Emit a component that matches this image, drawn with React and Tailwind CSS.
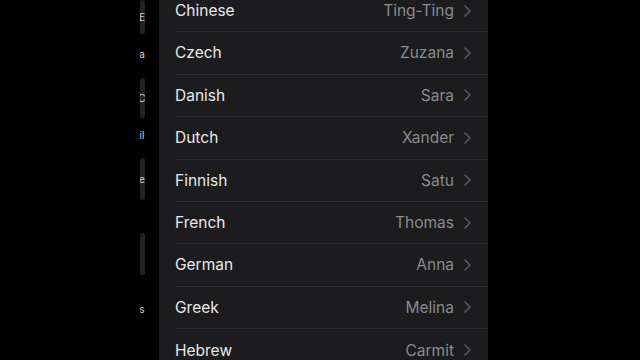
import React from 'react';

const voices = [
  { lang: 'Chinese', voice: 'Ting-Ting' },
  { lang: 'Czech', voice: 'Zuzana' },
  { lang: 'Danish', voice: 'Sara' },
  { lang: 'Dutch', voice: 'Xander' },
  { lang: 'Finnish', voice: 'Satu' },
  { lang: 'French', voice: 'Thomas' },
  { lang: 'German', voice: 'Anna' },
  { lang: 'Greek', voice: 'Melina' },
  { lang: 'Hebrew', voice: 'Carmit' },
];

// blurred edge of the page behind the sheet
const edgeBits = [
  { h: 'h-[34px]', mt: 'mt-0', ch: 'E' },
  { h: 'h-[28px]', mt: 'mt-[6px]', ch: 'a', bare: true },
  { h: 'h-[40px]', mt: 'mt-[10px]', ch: 'C' },
  { h: 'h-[22px]', mt: 'mt-[6px]', ch: 'il', bare: true },
  { h: 'h-[42px]', mt: 'mt-[12px]', ch: 'e' },
  { h: 'h-[42px]', mt: 'mt-[33px]', ch: '' },
  { h: 'h-[24px]', mt: 'mt-[22px]', ch: 's', bare: true },
];

const Chevron = () => (
  <svg width="7" height="12" viewBox="0 0 7 12" fill="none" className="ml-[10px] shrink-0">
    <path d="M1 1l5 5-5 5" stroke="#58585c" strokeWidth="1.6" strokeLinecap="round" strokeLinejoin="round" />
  </svg>
);

const App = () => {
  return (
    <div
      className="w-[640px] h-[360px] bg-black flex overflow-hidden"
      style={{ fontFamily: 'Inter, "Noto Sans", sans-serif' }}
    >
      {/* left edge of the page underneath */}
      <div className="w-[159px] shrink-0 flex justify-end pr-[14px]">
        <div className="w-[6px] flex flex-col items-center">
          {edgeBits.map((b, i) => (
            <div
              key={i}
              className={`${b.h} ${b.mt} w-[5px] rounded-sm flex items-center justify-center overflow-hidden ${b.bare ? '' : 'bg-[#232325]'}`}
            >
              <span className="text-[10px] leading-none text-[#d0d0d0] antialiased">{b.ch}</span>
            </div>
          ))}
        </div>
      </div>

      {/* voices sheet */}
      <div className="w-[329px] shrink-0 h-full bg-[#1c1c1e] overflow-hidden">
        <div className="-mt-[10px]">
          {voices.map((v, i) => (
            <div key={v.lang} className="pl-4">
              <div className={`h-[42.4px] flex items-center justify-between pr-[17px] ${i < voices.length - 1 ? 'border-b border-[#2c2c2f]' : ''}`}>
                <span className="text-[15.5px] text-[#e8e8ea] antialiased">{v.lang}</span>
                <div className="flex items-center">
                  <span className="text-[15.5px] text-[#8a8a8f] antialiased">{v.voice}</span>
                  <Chevron />
                </div>
              </div>
            </div>
          ))}
        </div>
      </div>

      <div className="flex-1" />
    </div>
  );
};

export default App;
